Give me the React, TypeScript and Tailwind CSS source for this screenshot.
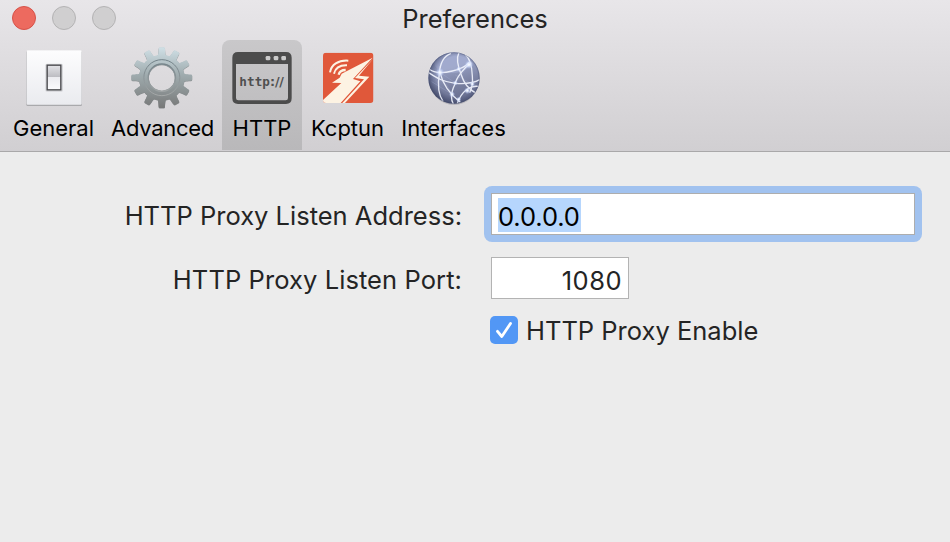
import type { ReactNode } from "react";

const teeth = Array.from({ length: 12 }, (_, i) => i * 30);

function GeneralIcon() {
  return (
    <svg viewBox="21 18 192 192" className="size-16">
      <defs>
        <linearGradient id="plate" x1="0" y1="0" x2="0" y2="1">
          <stop offset="0" stopColor="#fdfdfe" />
          <stop offset="1" stopColor="#eaebef" />
        </linearGradient>
        <linearGradient id="rocker" x1="0" y1="0" x2="0" y2="1">
          <stop offset="0" stopColor="#e4e4e8" />
          <stop offset="0.48" stopColor="#bcbcc1" />
          <stop offset="0.5" stopColor="#ececf0" />
          <stop offset="1" stopColor="#fbfbfd" />
        </linearGradient>
      </defs>
      <rect x="34" y="32" width="167" height="166" rx="4" fill="#a9a9ac" />
      <rect x="35" y="31" width="165" height="163" rx="3" fill="url(#plate)" />
      <rect x="91" y="71" width="53" height="84" rx="5" fill="#c3c4c8" opacity="0.6" />
      <rect x="96.500" y="75.500" width="41" height="74" fill="url(#rocker)" stroke="#47474b" strokeWidth="4" />
    </svg>
  );
}

function AdvancedIcon() {
  return (
    <svg viewBox="30 18 192 192" className="size-16">
      <defs>
        <linearGradient id="steel" gradientUnits="userSpaceOnUse" x1="0" y1="22" x2="0" y2="205">
          <stop offset="0" stopColor="#d0e0e6" />
          <stop offset="0.45" stopColor="#9fabae" />
          <stop offset="1" stopColor="#777878" />
        </linearGradient>
        <linearGradient id="ring" gradientUnits="userSpaceOnUse" x1="0" y1="60" x2="0" y2="168">
          <stop offset="0" stopColor="#718087" />
          <stop offset="1" stopColor="#a5a8a8" />
        </linearGradient>
        <mask id="gearMask" maskUnits="userSpaceOnUse" x="20" y="10" width="220" height="210">
          <circle cx="125.500" cy="113" r="68.500" fill="white" />
          {teeth.map((a) => (
            <path
              key={a}
              d="M109 54 C115 46 115 42 116 26 Q116 22 120 22 H131 Q135 22 135 26 C136 42 136 46 142 54Z"
              fill="white"
              transform={`rotate(${a} 125.5 113)`}
            />
          ))}
          <circle cx="125.500" cy="113" r="39" fill="black" />
        </mask>
      </defs>
      <g mask="url(#gearMask)" transform="translate(0 1.500)">
        <rect x="20" y="10" width="220" height="210" fill="#5f6668" opacity="0.7" />
      </g>
      <rect x="20" y="10" width="220" height="210" fill="url(#steel)" mask="url(#gearMask)" />
      <circle cx="125.500" cy="113" r="54" fill="none" stroke="url(#ring)" strokeWidth="3" />
      <circle cx="125.500" cy="113" r="41" fill="none" stroke="url(#ring)" strokeWidth="4" />
    </svg>
  );
}

function HttpIcon() {
  return (
    <svg viewBox="45 33 192 192" className="size-16 overflow-visible">
      <path
        fillRule="evenodd"
        fill="#4c4c4c"
        d="M69 51H213Q230 51 230 68V190Q230 207 213 207H69Q52 207 52 190V68Q52 51 69 51ZM63 87V189Q63 196 70 196H212Q219 196 219 189V87Z"
      />
      <rect x="152" y="63" width="14" height="13" rx="4" fill="#cbcbcb" />
      <rect x="176" y="63" width="14" height="13" rx="4" fill="#cbcbcb" />
      <rect x="199" y="63" width="14" height="13" rx="4" fill="#cbcbcb" />
      <text y="152" fontFamily="'DejaVu Sans Mono', monospace" fontWeight="700" fontSize="38" fill="#505050">
        <tspan x="73 96 119 142">http</tspan>
        <tspan x="165 180 193" fontFamily="'DejaVu Sans', sans-serif">{"://"}</tspan>
      </text>
    </svg>
  );
}

function KcptunIcon() {
  return (
    <svg viewBox="18 18 192 192" className="size-16">
      <defs>
        <clipPath id="tile">
          <rect x="39" y="38" width="151" height="151" rx="9" />
        </clipPath>
      </defs>
      <g clipPath="url(#tile)">
        <rect x="38" y="38" width="153" height="151" fill="#e0583a" />
        <path d="M188 53L95 101L89 113L66 128L94 129L38 181V190H91L151 124L129 117Z" fill="#fdf3e3" />
        <path d="M189 57L147 107L178 110L104 190H96L162 118L135 114Z" fill="#fdf3e3" />
        <g fill="none" stroke="#fdf3e3" strokeWidth="6">
          <path d="M60 97C64 74 84 60 115 62" />
          <path d="M72 101C76 85 88 75 111 76" />
          <path d="M86 104C88 95 95 90 107 90" strokeWidth="7" />
        </g>
      </g>
    </svg>
  );
}

const hubs = [
  [75, 97, 13],
  [162, 74, 13],
  [131, 87, 8],
  [121, 129, 8],
  [157, 152, 10],
  [111, 163, 9],
  [172, 132, 8],
  [131, 178, 8],
];

function InterfacesIcon() {
  return (
    <svg viewBox="21 18 192 192" className="size-16">
      <defs>
        <linearGradient id="ball" x1="0.3" y1="0" x2="0.6" y2="1">
          <stop offset="0" stopColor="#949fc6" />
          <stop offset="0.3" stopColor="#969fc2" />
          <stop offset="0.65" stopColor="#7980a0" />
          <stop offset="1" stopColor="#61688a" />
        </linearGradient>
        <radialGradient id="shade" cx="0.56" cy="0.47" r="0.56">
          <stop offset="0.7" stopColor="#2f3659" stopOpacity="0" />
          <stop offset="1" stopColor="#262d4c" stopOpacity="0.6" />
        </radialGradient>
        <radialGradient id="glow">
          <stop offset="0" stopColor="#ffffff" />
          <stop offset="0.35" stopColor="#e4edff" stopOpacity="0.85" />
          <stop offset="1" stopColor="#b4c7ff" stopOpacity="0" />
        </radialGradient>
        <clipPath id="disc">
          <circle cx="117" cy="114" r="77" />
        </clipPath>
      </defs>
      <ellipse cx="117" cy="119" rx="75" ry="76" fill="#55555f" opacity="0.25" />
      <g clipPath="url(#disc)">
        <rect x="38" y="35" width="160" height="160" fill="url(#ball)" />
        <ellipse cx="112" cy="68" rx="54" ry="31" fill="#b8c1e2" opacity="0.35" />
        <rect x="40" y="37" width="154" height="154" fill="url(#shade)" />
        <g fill="none" stroke="#a8b3d8" strokeWidth="2" opacity="0.45">
          <path d="M75 97L121 129L162 74M75 97L131 87M94 133L111 163M121 105L172 132M50 125L111 163" />
        </g>
        <g fill="none" stroke="#f1f4fd" strokeWidth="4" opacity="0.92">
          <path d="M108 40C84 49 75 72 73 100C68 132 70 164 84 184" />
          <path d="M42 86C58 101 88 99 112 93C134 89 151 80 164 66" />
          <path d="M41 98C68 116 87 126 121 130C149 132 176 130 194 119" />
          <path d="M132 38C122 57 129 81 139 105C145 126 155 145 184 160" />
          <path d="M151 44C164 54 171 80 172 108C174 130 171 145 164 158" />
          <path d="M169 68C146 84 124 113 119 134C109 155 105 174 115 192" />
          <path d="M75 97C83 134 102 160 136 187" />
          <path d="M190 139C166 136 140 153 127 190" />
        </g>
        {hubs.map(([x, y, r]) => (
          <circle key={`${x}-${y}`} cx={x} cy={y} r={r} fill="url(#glow)" />
        ))}
      </g>
      <circle cx="117" cy="114" r="76" fill="none" stroke="#434a6b" strokeWidth="2" opacity="0.5" />
    </svg>
  );
}

function Tab({ width, label, text, selected, children }: { width: string; label: string; text: string; selected?: boolean; children: ReactNode }) {
  return (
    <button
      className={`flex h-[110px] shrink-0 flex-col items-center pt-1.5 ${width} ${selected ? "rounded-t-lg bg-gradient-to-b from-[#c9c8ca] to-[#b9b8ba]" : ""}`}
    >
      {children}
      <span className={`mt-1 whitespace-nowrap leading-7 text-black ${text}`}>{label}</span>
    </button>
  );
}

export default function App() {
  return (
    <div className="h-[542px] w-[950px] overflow-hidden bg-[#ececec] font-['Inter',sans-serif] text-[#242424]">
      <header className="h-[152px] border-b border-[#a9a8a9] bg-gradient-to-b from-[#e8e6e9] to-[#d1cfd2]">
        <div className="grid h-10 grid-cols-[1fr_auto_1fr] items-start">
          <div className="flex gap-4 pl-3 pt-1.5">
            <span className="size-6 rounded-full border border-[#d65249] bg-[#ed6a5f]" />
            <span className="size-6 rounded-full border border-[#b4b3b4] bg-[#d0cfd0]" />
            <span className="size-6 rounded-full border border-[#b4b3b4] bg-[#d0cfd0]" />
          </div>
          <h1 className="pt-[3px] text-[25.5px] leading-8 tracking-[-0.05px]">Preferences</h1>
        </div>
        <nav className="flex pl-1">
          <Tab width="w-[99px]" label="General" text="text-[22px]"><GeneralIcon /></Tab>
          <Tab width="w-[117px]" label="Advanced" text="pl-0.5 text-[22px] tracking-[-0.3px]"><AdvancedIcon /></Tab>
          <div className="w-0.5" />
          <Tab width="w-20" label="HTTP" text="text-[22px]" selected><HttpIcon /></Tab>
          <Tab width="w-[91px]" label="Kcptun" text="text-[22px]"><KcptunIcon /></Tab>
          <Tab width="w-[121px]" label="Interfaces" text="text-[22px]"><InterfacesIcon /></Tab>
        </nav>
      </header>
      <main className="grid grid-cols-[462px_1fr] gap-x-[29px] pt-[41px] text-[25.5px] leading-8">
        <label className="pt-[7px] text-right">HTTP Proxy Listen Address:</label>
        <div className="-my-[7px] -ml-[7px] h-14 w-[438px] rounded-lg bg-[#a1c2ef] p-[7px]">
          <div className="flex h-[42px] items-center border border-[#adadad] bg-white px-1.5 pt-0.5">
            <span className="h-[34px] bg-[#b6d6fd] pr-px leading-[37px] tracking-[-0.1px] text-black">0.0.0.0</span>
          </div>
        </div>
        <label className="mt-[22px] pt-[7px] text-right tracking-[0.08px]">HTTP Proxy Listen Port:</label>
        <div className="mt-[22px] flex h-[42px] w-[138px] items-center justify-end border border-[#b3b3b3] bg-white pl-1.5 pr-1.5 pt-[5px] tracking-[0.5px]">1080</div>
        <div />
        <label className="-ml-px mt-3.5 flex items-center gap-2">
          <span className="flex size-7 items-center justify-center rounded-[5px] bg-[#5297f5]">
            <svg viewBox="0 0 28 28" className="size-7" fill="none" stroke="white" strokeWidth="2.800" strokeLinecap="round" strokeLinejoin="round">
              <path d="M7.500 15.300L11.800 20.500L20.500 7.500" />
            </svg>
          </span>
          <span className="pt-0.5">HTTP Proxy Enable</span>
        </label>
      </main>
    </div>
  );
}
